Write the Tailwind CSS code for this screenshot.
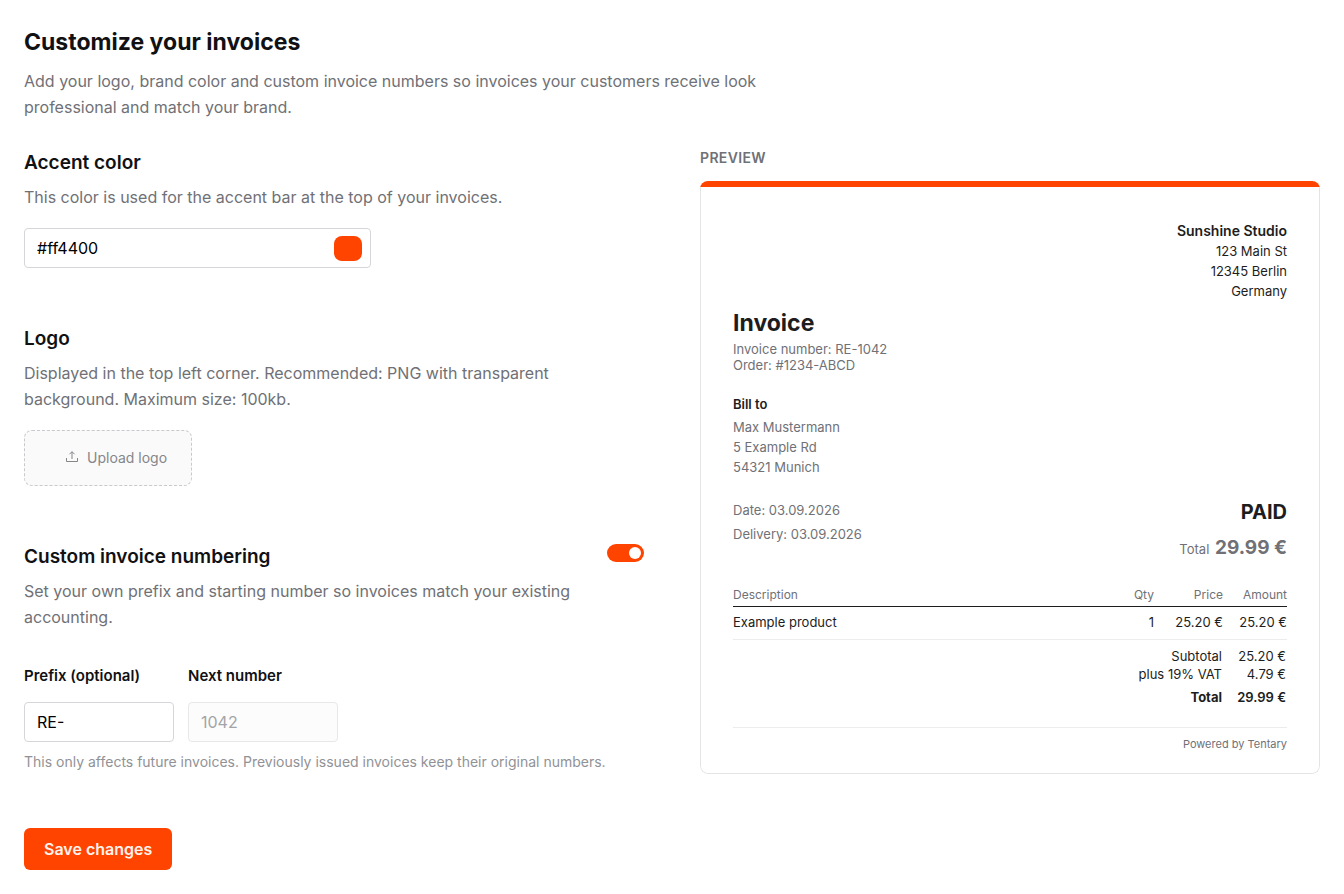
<!DOCTYPE html>
<html lang="en">
<head>
    <meta charset="UTF-8">
    <meta name="viewport" content="width=device-width, initial-scale=1.0">
    <title>Customize your invoices</title>
    <script src="https://cdn.jsdelivr.net/npm/@tailwindcss/browser@4"></script>
</head>
<body class="bg-white p-6 font-['Inter',sans-serif] text-base text-[#111113]">
    <header class="max-w-[760px]">
        <h1 class="text-[23px] leading-9 font-bold">Customize your invoices</h1>
        <p class="mt-2 leading-[26px] text-[#707176]">Add your logo, brand color and custom invoice numbers so invoices your customers receive look professional and match your brand.</p>
    </header>

    <div class="mt-7 grid grid-cols-2 items-start gap-14">

        <!-- Settings -->
        <form class="flex flex-col gap-14">
            <section>
                <h2 class="text-[19px] leading-[30px] font-semibold"><label for="accent-color">Accent color</label></h2>
                <p class="mt-1.5 leading-[26px] text-[#707176]">This color is used for the accent bar at the top of your invoices.</p>
                <div class="mt-[18px] flex h-10 w-[347px] items-center rounded border border-[#d5d6d9] pr-2 pl-3">
                    <input type="text" id="accent-color" value="#ff4400" class="min-w-0 flex-1 text-black outline-none">
                    <button type="button" aria-label="Pick color" class="h-[25px] w-7 rounded-lg bg-[#ff4400]"></button>
                </div>
            </section>

            <section>
                <h2 class="text-[19px] leading-[30px] font-semibold">Logo</h2>
                <p class="mt-1.5 max-w-[560px] leading-[26px] text-[#707176]">Displayed in the top left corner. Recommended: PNG with transparent background. Maximum size: 100kb.</p>
                <button type="button" class="mt-[18px] flex h-14 items-center gap-2 rounded-lg border border-dashed border-[#c8c9cc] bg-[#fafafa] pr-6 pl-10 text-sm text-[#85868a]">
                    <svg class="size-3.5" viewBox="0 0 14 14" fill="none" stroke="currentColor" aria-hidden="true">
                        <path d="M1.500 7v3.500h11V7M7 8V.7M4.500 3.200 7 .7 9.500 3.200"/>
                    </svg>
                    Upload logo
                </button>
            </section>

            <section>
                <div class="flex items-start justify-between">
                    <h2 class="text-[19px] leading-[30px] font-semibold"><label for="custom-numbering">Custom invoice numbering</label></h2>
                    <input type="checkbox" role="switch" id="custom-numbering" checked class="mt-0.5 flex h-[18px] w-[37px] appearance-none items-center rounded-full bg-gray-300 px-[3px] before:size-3 before:rounded-full before:bg-white checked:justify-end checked:bg-[#ff4400]">
                </div>
                <p class="mt-1.5 max-w-[560px] leading-[26px] text-[#707176]">Set your own prefix and starting number so invoices match your existing accounting.</p>
                <div class="mt-[34px] flex gap-3.5">
                    <div class="w-[150px]">
                        <label for="prefix" class="block text-[15px] leading-6 font-semibold">Prefix (optional)</label>
                        <input type="text" id="prefix" value="RE-" class="mt-3.5 block h-10 w-full rounded border border-[#d5d6d9] px-3 text-black">
                    </div>
                    <div class="w-[150px]">
                        <label for="next-number" class="block text-[15px] leading-6 font-semibold">Next number</label>
                        <input type="text" id="next-number" value="1042" disabled class="mt-3.5 block h-10 w-full rounded border border-[#e8e8ea] bg-[#fcfcfc] px-3 text-[#a3a4a7]">
                    </div>
                </div>
                <p class="mt-2.5 text-sm leading-5 text-[#919296]">This only affects future invoices. Previously issued invoices keep their original numbers.</p>
            </section>

            <button type="submit" class="h-[42px] self-start rounded-md bg-[#ff4400] px-5 font-semibold text-[#fff3ec]">Save changes</button>
        </form>

        <!-- Preview -->
        <section>
            <h2 class="text-sm leading-5 font-semibold tracking-wide text-[#707176] uppercase">Preview</h2>
            <article class="mt-[13px] overflow-hidden rounded-lg text-[13px] text-[#1d1d20]">
                <div class="h-1.5 bg-[#ff4400]"></div>
                <div class="rounded-b-lg border border-t-0 border-[#e3e4e6] bg-white px-8 pt-[34px] pb-[21px]">
                    <address class="text-right leading-5 not-italic">
                        <strong class="block text-sm leading-5 font-semibold">Sunshine Studio</strong>
                        123 Main St<br>12345 Berlin<br>Germany
                    </address>

                    <h3 class="mt-2 text-[23px] leading-7 font-bold">Invoice</h3>
                    <p class="mt-1 leading-4 text-[#707176]">Invoice number: RE-1042<br>Order: #1234-ABCD</p>

                    <h4 class="mt-[21px] leading-5 font-semibold">Bill to</h4>
                    <p class="mt-[3px] leading-5 text-[#707176]">Max Mustermann<br>5 Example Rd<br>54321 Munich</p>

                    <div class="mt-[21px] flex justify-between text-[#707176]">
                        <p class="leading-6">Date: 03.09.2026<br>Delivery: 03.09.2026</p>
                        <div class="text-right">
                            <p class="text-xl leading-7 font-bold text-[#1d1d20]">PAID</p>
                            <p class="mt-2 leading-7">Total <strong class="ml-0.5 text-[19px] leading-7 font-bold">29.99 €</strong></p>
                        </div>
                    </div>

                    <table class="mt-6 w-full text-right">
                        <thead class="border-b border-[#1d1d20] text-xs leading-4 text-[#707176]">
                            <tr>
                                <th class="pb-[3px] text-left font-normal">Description</th>
                                <th class="pb-[3px] font-normal">Qty</th>
                                <th class="w-[69px] pb-[3px] font-normal">Price</th>
                                <th class="w-16 pb-[3px] font-normal">Amount</th>
                            </tr>
                        </thead>
                        <tbody class="border-b border-[#ececee] leading-5">
                            <tr>
                                <td class="pt-[5px] pb-[7px] text-left">Example product</td>
                                <td class="pt-[5px] pb-[7px]">1</td>
                                <td class="pt-[5px] pb-[7px]">25.20 €</td>
                                <td class="pt-[5px] pb-[7px]">25.20 €</td>
                            </tr>
                        </tbody>
                        <tfoot class="leading-[18px]">
                            <tr>
                                <th colspan="3" class="pt-[7px] pr-px font-normal">Subtotal</th>
                                <td class="pt-[7px] pr-px">25.20 €</td>
                            </tr>
                            <tr>
                                <th colspan="3" class="pr-px font-normal">plus 19% VAT</th>
                                <td class="pr-px">4.79 €</td>
                            </tr>
                            <tr class="font-semibold">
                                <th colspan="3" class="pt-[5px] pr-px">Total</th>
                                <td class="pt-[5px] pr-px">29.99 €</td>
                            </tr>
                        </tfoot>
                    </table>

                    <p class="mt-[21px] border-t border-[#ececee] pt-2 text-right text-[11px] leading-4 text-[#707176]">Powered by Tentary</p>
                </div>
            </article>
        </section>
    </div>
</body>
</html>
